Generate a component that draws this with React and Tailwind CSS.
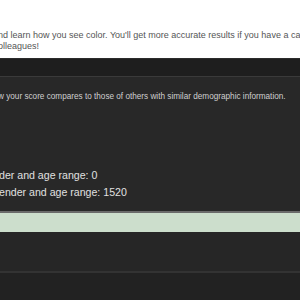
export default function App() {
  return (
    <div className="w-[300px] h-[300px] overflow-hidden bg-[#262626] flex flex-col font-['Liberation_Sans',Arial,sans-serif]">
      {/* Intro text on white */}
      <div className="h-[58px] bg-white shrink-0 pt-[30px] overflow-hidden">
        <p className="-ml-[2px] w-[400px] text-[9px] leading-[11px] text-[#555] whitespace-nowrap">
          nd learn how you see color. You&apos;ll get more accurate results if you have a cal
          <br />
          olleagues!
        </p>
      </div>

      {/* Dark header strip */}
      <div className="h-[18px] bg-[#1e1e1e] border-t border-[#2c2c2c] shrink-0" />

      {/* Results panel */}
      <div className="border-t border-[#3a3a3a] bg-[#282828] flex flex-col shrink-0">
        <p className="-ml-[2px] mt-[14px] text-[8.2px] leading-[11px] text-[#cfcfcf] whitespace-nowrap">
          w your score compares to those of others with similar demographic information.
        </p>
        <div className="mt-[65px] flex flex-col text-[10.6px] leading-[17px] text-[#e0e0e0] whitespace-nowrap">
          <p className="-ml-[1px]">der and age range: 0</p>
          <p className="-ml-[1px]">ender and age range: 1520</p>
        </div>
        <div className="mt-[10px] h-[21px] bg-[#ccdecc] border-t-2 border-[#6a6a6a]" />
        <div className="h-[39px] bg-[#262626]" />
      </div>

      <div className="h-[2px] bg-[#333] shrink-0" />
      <div className="flex-1 bg-[#222]" />
    </div>
  );
}
